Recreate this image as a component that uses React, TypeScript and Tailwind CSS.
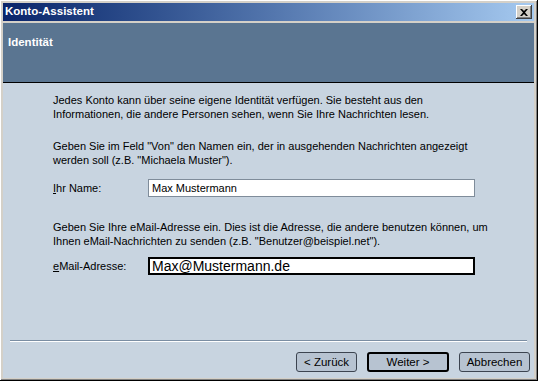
import React from 'react';

const ui = { fontFamily: '"Liberation Sans", Arial, sans-serif' };

function WizButton({ label, primary }: { label: string; primary?: boolean }) {
  return (
    <button
      className={
        'h-[20px] rounded-[3px] bg-[#b7c3d1] text-[11.5px] text-black ' +
        (primary ? 'border-2 border-black' : 'border border-[#3c4450]')
      }
      style={ui}
    >
      {label}
    </button>
  );
}

export default function App() {
  return (
    <div
      className="w-[538px] h-[381px] bg-[#d4d0c8] flex flex-col pl-[3px] pr-[4px] pt-[3px] pb-[3px] shadow-[inset_-1px_-1px_#000,inset_1px_1px_#fff,inset_-2px_-2px_#808080]"
      style={ui}
    >
      {/* Title bar */}
      <div className="h-[18px] flex items-center justify-between pl-[2px] pr-[2px] bg-gradient-to-r from-[#0a246a] to-[#a6caf0]">
        <span className="text-[11.5px] font-bold text-white leading-none">Konto-Assistent</span>
        <div className="w-[16px] h-[14px] bg-[#d4d0c8] flex items-center justify-center shadow-[inset_-1px_-1px_#404040,inset_1px_1px_#fff,inset_-2px_-2px_#808080]">
          <svg width="8" height="7" viewBox="0 0 8 7">
            <path d="M0 0h2l2 2 2-2h2L5 3.5 8 7H6L4 5 2 7H0l3-3.5z" fill="#000" />
          </svg>
        </div>
      </div>

      <div className="mt-[2px] flex-1 flex flex-col">
        {/* Header */}
        <div className="h-[60px] bg-[#5a7591] border-b border-black pl-[5px] pt-[12px]">
          <div className="text-[11.5px] font-bold text-white leading-[14px]">Identität</div>
        </div>

        {/* Body */}
        <div className="flex-1 bg-[#c8d4e0] flex flex-col text-[11px] text-black leading-[14px]">
          <div className="pl-[50px] pt-[10px] whitespace-nowrap">
            Jedes Konto kann über seine eigene Identität verfügen. Sie besteht aus den
            <br />
            Informationen, die andere Personen sehen, wenn Sie Ihre Nachrichten lesen.
          </div>

          <div className="pl-[50px] mt-[18px] whitespace-nowrap">
            Geben Sie im Feld "Von" den Namen ein, der in ausgehenden Nachrichten angezeigt
            <br />
            werden soll (z.B. "Michaela Muster").
          </div>

          <div className="pl-[50px] mt-[12px] flex items-center">
            <label className="w-[95px]">
              <span className="underline">I</span>hr Name:
            </label>
            <div className="w-[327px] h-[18px] bg-white border border-[#7f8c9a] flex items-center px-[3px]">
              Max Mustermann
            </div>
          </div>

          <div className="pl-[50px] mt-[23px] whitespace-nowrap">
            Geben Sie Ihre eMail-Adresse ein. Dies ist die Adresse, die andere benutzen können, um
            <br />
            Ihnen eMail-Nachrichten zu senden (z.B. "Benutzer@beispiel.net").
          </div>

          <div className="pl-[50px] mt-[9px] flex items-center">
            <label className="w-[95px]">
              <span className="underline">e</span>Mail-Adresse:
            </label>
            <div className="w-[327px] h-[18px] bg-white border-2 border-black flex items-center px-[2px] text-[14px]">
              Max@Mustermann.de
            </div>
          </div>

          <div className="flex-1" />

          {/* Separator */}
          <div className="mx-[7px] h-[2px] border-t border-[#7b8ea3] border-b border-b-white" />

          {/* Buttons */}
          <div className="flex justify-end gap-[10px] pr-[4px] pt-[10px] pb-[6px]">
            <div className="w-[61px] flex"><div className="flex-1 flex flex-col"><WizButton label="< Zurück" /></div></div>
            <div className="w-[82px] flex"><div className="flex-1 flex flex-col"><WizButton label="Weiter >" primary /></div></div>
            <div className="w-[71px] flex"><div className="flex-1 flex flex-col"><WizButton label="Abbrechen" /></div></div>
          </div>
        </div>
      </div>
    </div>
  );
}
